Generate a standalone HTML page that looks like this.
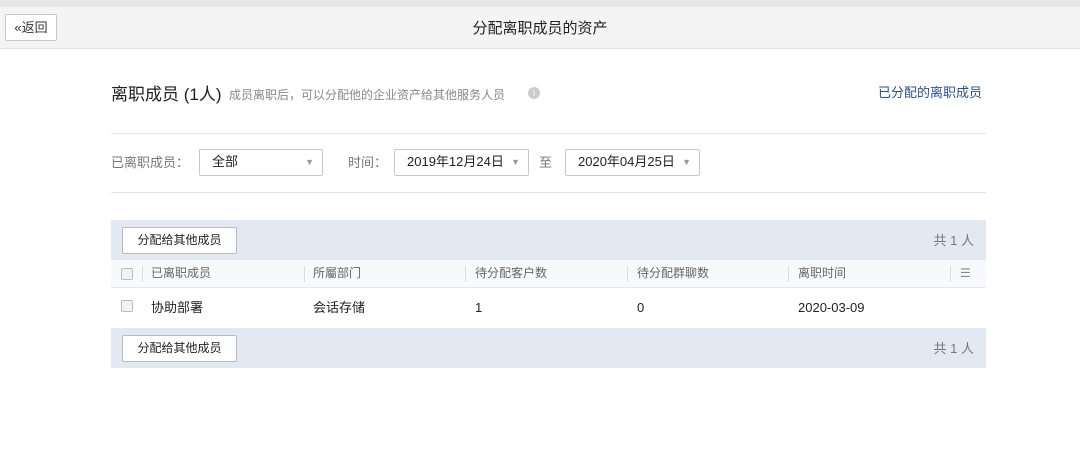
<!DOCTYPE html>
<html><head><meta charset="utf-8"><style>
*{margin:0;padding:0;box-sizing:border-box}
body{width:1080px;height:452px;background:#fff;font-family:"Liberation Sans","Noto Sans CJK SC",sans-serif;color:#333;position:relative;overflow:hidden;font-size:12px}
.abs{position:absolute;line-height:1}
.top{left:0;top:0;width:1080px;height:7px;background:#e6e6e6}
.hdr{left:0;top:7px;width:1080px;height:42px;background:#f4f4f4;border-bottom:1px solid #e2e4e8}
.back{left:5px;top:14px;width:52px;height:27px;border:1px solid #c8c8c8;background:#fff;border-radius:2px;font-size:13px;line-height:25px;text-align:center;color:#333}
.title{left:0;width:1080px;top:21px;text-align:center;font-size:15px;color:#222}
.line{left:111px;width:875px;height:1px;background:#e5e5e5}
.sel{height:27px;border:1px solid #c9c9c9;border-radius:2px;background:#fff;font-size:13px;line-height:23px;padding-left:12px;color:#222}
.sel i{position:absolute;right:8px;top:0;font-style:normal;font-size:9px;color:#999;line-height:25px}
.blue{background:#e3e9f2;left:111px;width:875px;height:40px}
.btn{position:absolute;left:11px;top:7px;width:115px;height:27px;border:1px solid #bbb;border-radius:2px;background:#fff;font-size:12px;line-height:24px;text-align:center;color:#222}
.cnt{position:absolute;right:12px;top:14px;font-size:13px;color:#777;line-height:1}
.cb{width:12px;height:12px;border:1px solid #bbb;border-radius:2px;background:#f3f3f3}
.th{font-size:12px;color:#666;top:267px}
.td{font-size:13px;color:#222;top:301px}
.tdn{font-size:13px;color:#222;top:301px}
.sep{width:1px;height:16px;background:#ddd;top:266px}
</style></head><body>
<div class="abs top"></div>
<div class="abs hdr"></div>
<div class="abs back">«返回</div>
<div class="abs title">分配离职成员的资产</div>

<div class="abs" style="left:111px;top:86px;font-size:17px;color:#222">离职成员 (1人)</div>
<div class="abs" style="left:229px;top:89px;font-size:12px;color:#888">成员离职后，可以分配他的企业资产给其他服务人员</div>
<div class="abs" style="left:528px;top:87px;width:12px;height:12px;border-radius:50%;background:#ccc;color:#fff;font-size:9px;text-align:center;line-height:12px">i</div>
<div class="abs" style="left:878px;top:86px;font-size:13px;color:#2b4f8f">已分配的离职成员</div>

<div class="abs line" style="top:133px"></div>
<div class="abs" style="left:111px;top:156px;font-size:13px;color:#777">已离职成员：</div>
<div class="abs sel" style="left:199px;top:149px;width:124px;line-height:24px">全部<i>▼</i></div>
<div class="abs" style="left:348px;top:156px;font-size:13px;color:#777">时间：</div>
<div class="abs sel" style="left:394px;top:149px;width:135px">2019年12月24日<i>▼</i></div>
<div class="abs" style="left:539px;top:156px;font-size:13px;color:#777">至</div>
<div class="abs sel" style="left:565px;top:149px;width:135px">2020年04月25日<i>▼</i></div>
<div class="abs line" style="top:192px"></div>

<div class="abs blue" style="top:220px"><div class="btn">分配给其他成员</div><div class="cnt">共 1 人</div></div>
<div class="abs" style="left:111px;top:260px;width:875px;height:28px;background:#f8f9fb;border-bottom:1px solid #e8e8e8"></div>
<div class="abs cb" style="left:121px;top:268px"></div>
<div class="abs sep" style="left:142px"></div>
<div class="abs th" style="left:151px">已离职成员</div>
<div class="abs sep" style="left:304px"></div>
<div class="abs th" style="left:313px">所屬部门</div>
<div class="abs sep" style="left:465px"></div>
<div class="abs th" style="left:475px">待分配客户数</div>
<div class="abs sep" style="left:627px"></div>
<div class="abs th" style="left:637px">待分配群聊数</div>
<div class="abs sep" style="left:788px"></div>
<div class="abs th" style="left:798px">离职时间</div>
<div class="abs sep" style="left:950px"></div>
<div class="abs th" style="left:960px;color:#888">☰</div>

<div class="abs cb" style="left:121px;top:300px"></div>
<div class="abs td" style="left:151px">协助部署</div>
<div class="abs td" style="left:313px">会话存储</div>
<div class="abs tdn" style="left:475px">1</div>
<div class="abs tdn" style="left:637px">0</div>
<div class="abs tdn" style="left:798px">2020-03-09</div>

<div class="abs blue" style="top:328px"><div class="btn">分配给其他成员</div><div class="cnt">共 1 人</div></div>
</body></html>
